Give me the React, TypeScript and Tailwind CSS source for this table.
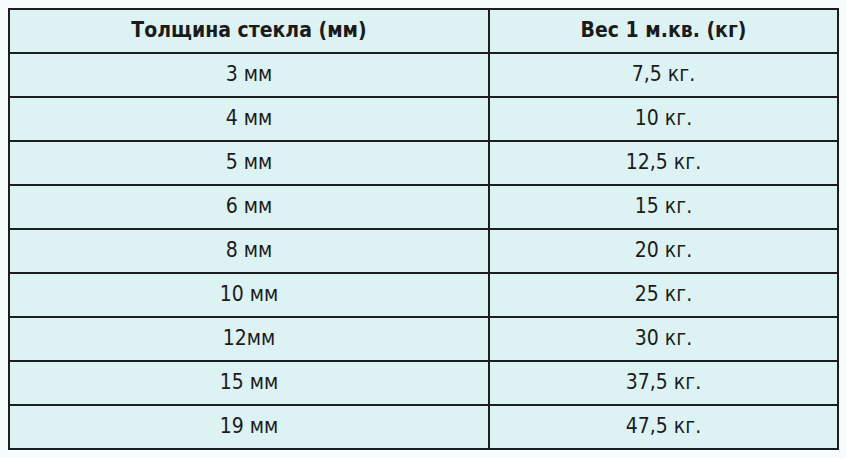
const rows: [string, string][] = [
  ['3 мм', '7,5 кг.'],
  ['4 мм', '10 кг.'],
  ['5 мм', '12,5 кг.'],
  ['6 мм', '15 кг.'],
  ['8 мм', '20 кг.'],
  ['10 мм', '25 кг.'],
  ['12мм', '30 кг.'],
  ['15 мм', '37,5 кг.'],
  ['19 мм', '47,5 кг.'],
];

export default function App() {
  return (
    <div className="w-[846px] h-[458px] bg-[#f6fbfb] pt-2 pl-2 font-['DejaVu_Sans_Condensed','DejaVu_Sans',sans-serif] text-[#1b1b1b]">
      <table className="w-[831px] border-collapse border-2 border-[#1c1f20] table-fixed">
        <thead>
          <tr className="h-[44px] bg-[#ddf2f2]">
            <th className="w-[480px] border-2 border-[#1c1f20] text-[21px] font-bold">Толщина стекла (мм)</th>
            <th className="border-2 border-[#1c1f20] text-[21px] font-bold">Вес 1 м.кв. (кг)</th>
          </tr>
        </thead>
        <tbody>
          {rows.map(([a, b]) => (
            <tr key={a} className="h-[44px] bg-[#ddf2f2]">
              <td className="border-2 border-[#1c1f20] text-center text-[21px]">{a}</td>
              <td className="border-2 border-[#1c1f20] text-center text-[21px]">{b}</td>
            </tr>
          ))}
        </tbody>
      </table>
    </div>
  );
}
